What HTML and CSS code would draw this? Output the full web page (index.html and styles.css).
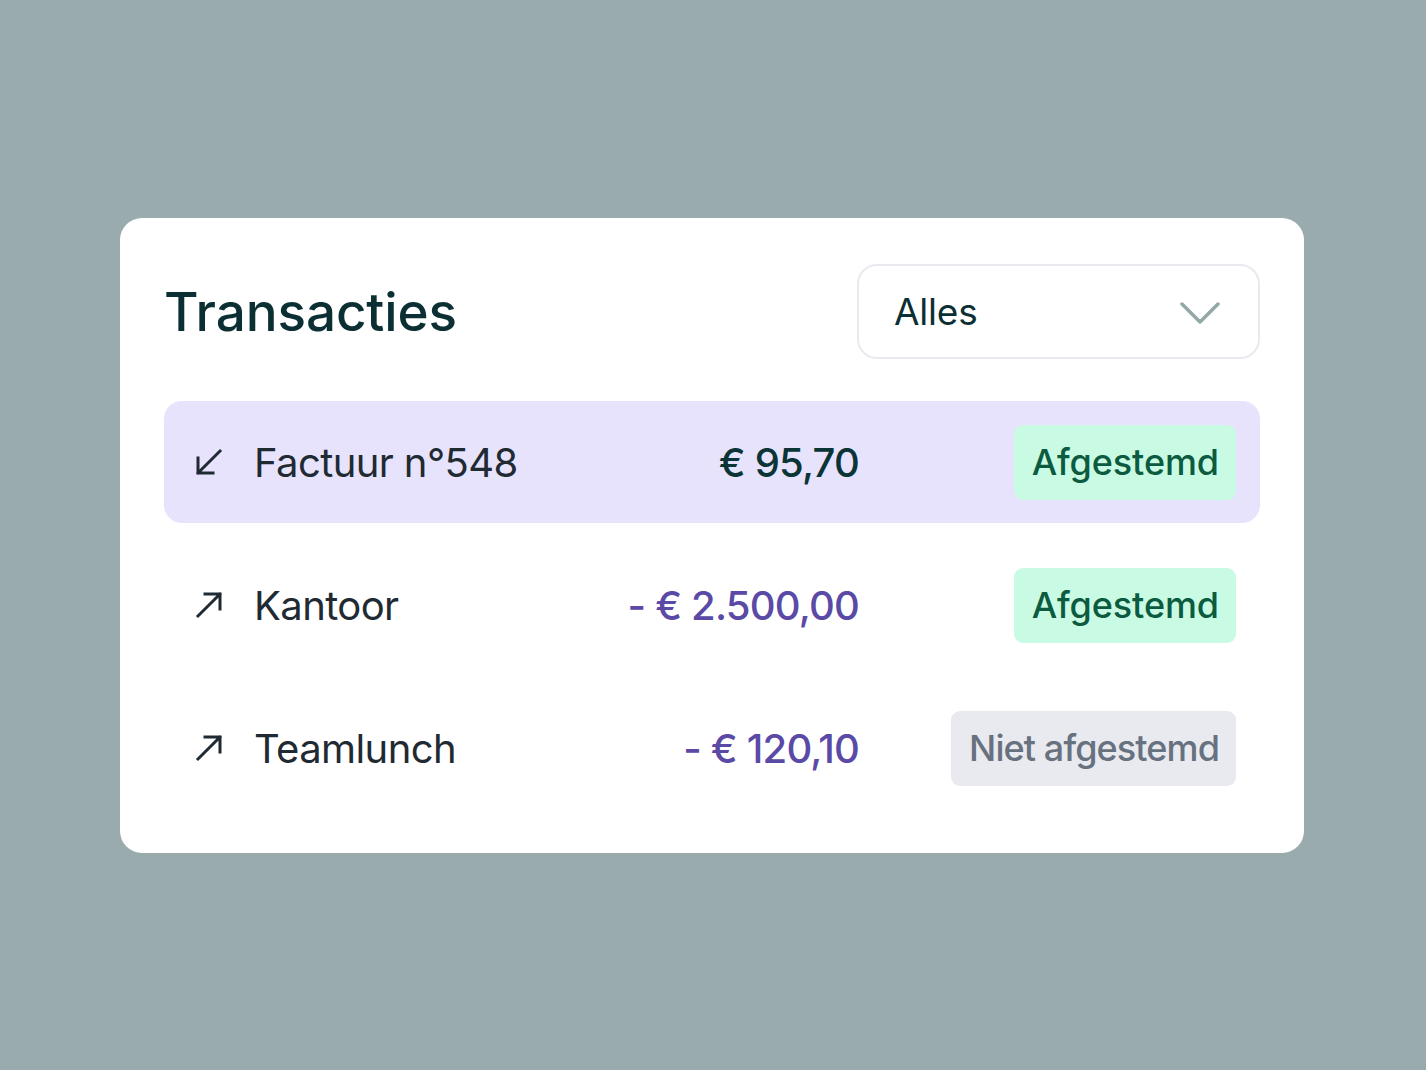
FILE: index.html
```html
<!DOCTYPE html>
<html lang="nl">
<head>
<meta charset="utf-8">
<title>Transacties</title>
<link rel="stylesheet" href="styles.css">
</head>
<body>
<main class="stage">
  <section class="card">
    <header class="card-head">
      <h1 class="title">Transacties</h1>
      <div class="select">
        <span class="select-value">Alles</span>
        <svg class="chevron" width="40" height="24" viewBox="0 0 40 24" aria-hidden="true">
          <path d="M2 3 L20 21 L38 3" fill="none" stroke="#94a7a8" stroke-width="3.5" stroke-linecap="round" stroke-linejoin="round"/>
        </svg>
      </div>
    </header>
    <ul class="rows">
      <li class="row row-active">
        <svg class="dir" width="28" height="28" viewBox="0 0 28 28" aria-hidden="true">
          <path d="M25 3 L3 25 M3 10 V25 H18" fill="none" stroke="#1f2a33" stroke-width="3" stroke-linecap="square"/>
        </svg>
        <span class="label">Factuur n°548</span>
        <span class="amount amount-in">€ 95,70</span>
        <span class="badge badge-ok">Afgestemd</span>
      </li>
      <li class="row">
        <svg class="dir" width="28" height="28" viewBox="0 0 28 28" aria-hidden="true">
          <path d="M3 25 L25 3 M10 3 H25 V18" fill="none" stroke="#1f2a33" stroke-width="3" stroke-linecap="square"/>
        </svg>
        <span class="label">Kantoor</span>
        <span class="amount amount-out">- € 2.500,00</span>
        <span class="badge badge-ok">Afgestemd</span>
      </li>
      <li class="row">
        <svg class="dir" width="28" height="28" viewBox="0 0 28 28" aria-hidden="true">
          <path d="M3 25 L25 3 M10 3 H25 V18" fill="none" stroke="#1f2a33" stroke-width="3" stroke-linecap="square"/>
        </svg>
        <span class="label">Teamlunch</span>
        <span class="amount amount-out">- € 120,10</span>
        <span class="badge badge-none">Niet afgestemd</span>
      </li>
    </ul>
  </section>
</main>
</body>
</html>
```

FILE: styles.css
```css
* { box-sizing: border-box; }

html, body {
  margin: 0;
  padding: 0;
}

body {
  background: #9aabae;
  font-family: "Inter", "Liberation Sans", sans-serif;
  width: 1426px;
  height: 1070px;
}

.stage {
  height: 1070px;
  padding: 218px 122px 0 120px;
}

.card {
  background: #ffffff;
  border-radius: 22px;
  width: 1184px;
  height: 635px;
  padding: 46px 44px 44px 44px;
}

.card-head {
  display: flex;
  justify-content: space-between;
  align-items: center;
  height: 95px;
}

.title {
  margin: 0;
  font-size: 53px;
  font-weight: 500;
  letter-spacing: -0.1px;
  color: #0b2f33;
}

.select {
  width: 403px;
  height: 95px;
  border: 2px solid #e9e9f0;
  border-radius: 20px;
  display: flex;
  align-items: center;
  justify-content: space-between;
  padding: 0 38px 0 35px;
}

.select-value {
  font-size: 37px;
  color: #0b2f33;
  font-weight: 400;
  letter-spacing: -0.2px;
}

.chevron { display: block; margin-top: 2px; }

.rows {
  list-style: none;
  margin: 42px 0 0 0;
  padding: 0;
  display: flex;
  flex-direction: column;
  gap: 21px;
}

.row {
  height: 122px;
  border-radius: 18px;
  display: grid;
  grid-template-columns: 59px 300px 305px 1fr;
  align-items: center;
  padding: 0 24px 0 31px;
}

.row-active { background: #e7e3fd; }

.dir { display: block; }

.label {
  font-size: 40px;
  color: #1f2a33;
  letter-spacing: -0.6px;
  font-weight: 400;
}

.amount {
  font-size: 40px;
  font-weight: 500;
  letter-spacing: -0.8px;
  text-align: right;
}

.amount-in { color: #0b3436; }
.amount-out { color: #5a4aa6; }

.badge {
  justify-self: end;
  height: 75px;
  display: flex;
  align-items: center;
  padding: 0 17px 0 18px;
  border-radius: 9px;
  font-size: 36px;
  font-weight: 500;
  letter-spacing: -0.1px;
}

.badge-ok {
  background: #c9fbe4;
  color: #0c5b40;
}

.badge-none {
  background: #e9eaef;
  color: #67717f;
  letter-spacing: -0.9px;
}
```
